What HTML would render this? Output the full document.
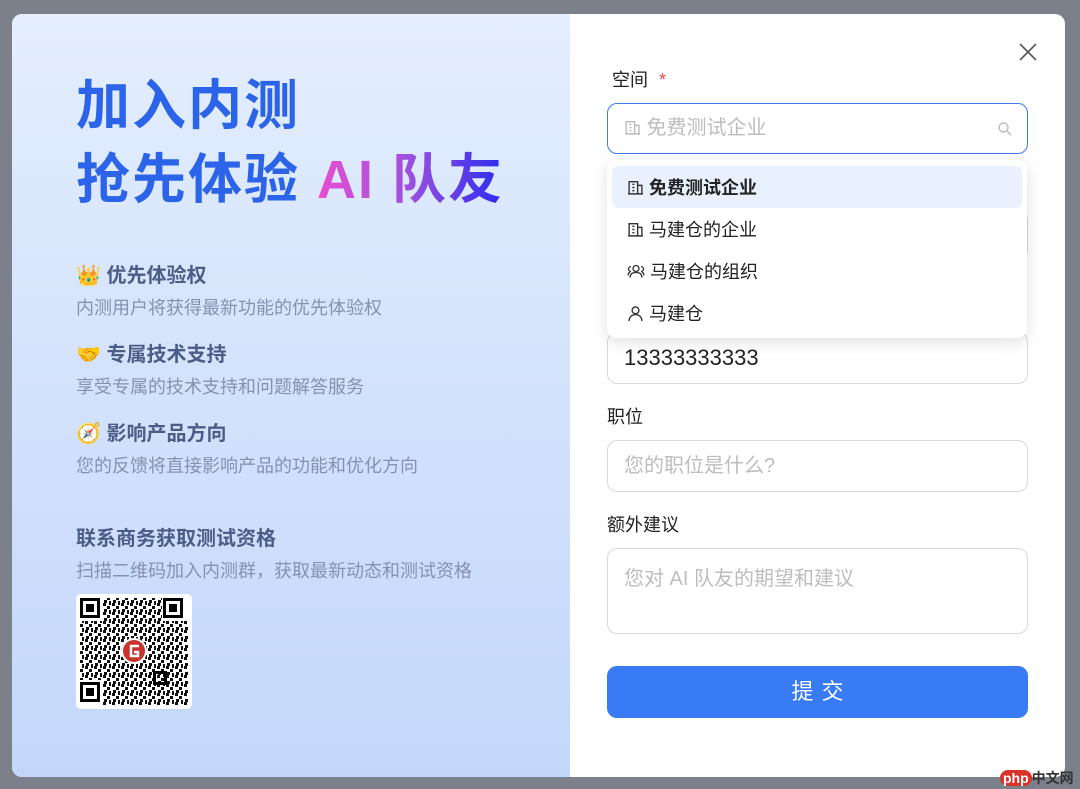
<!DOCTYPE html>
<html><head><meta charset="utf-8"><style>
*{box-sizing:border-box;margin:0;padding:0}
body{width:1080px;height:789px;background:#7b808b;font-family:"Liberation Sans","Noto Sans CJK SC",sans-serif;position:relative;overflow:hidden}
.modal{position:absolute;left:12px;top:14px;width:1053px;height:763px;border-radius:10px;overflow:hidden;background:#fff}
.left{position:absolute;left:0;top:0;width:558px;height:763px;background:linear-gradient(180deg,#e4eefe 0%,#d3e2fc 50%,#c4d7fb 100%)}
.t{position:absolute;left:64px;font-size:54px;font-weight:bold;color:#2b64e8;letter-spacing:2px;line-height:64px}
.ai{background:linear-gradient(90deg,#e84fd2,#9b4fe0 50%,#2a2cf0);-webkit-background-clip:text;background-clip:text;color:transparent}
.h{position:absolute;left:64px;font-size:20px;font-weight:bold;color:#4b5d86}
.d{position:absolute;left:64px;font-size:18px;color:#8591af}
.lab{position:absolute;left:600px;font-size:18px;color:#222}
.box{position:absolute;left:595px;width:421px;border:1px solid #d9d9d9;border-radius:10px;background:#fff;font-size:20px;padding-left:16px}
.ph{color:#bdbdbd}
</style></head><body>
<div class="modal">
<div class="left">
<div class="t" style="top:60px">加入内测</div>
<div class="t" style="top:134px">抢先体验 <span class="ai">AI 队友</span></div>
<div class="h" style="top:245px">👑 优先体验权</div>
<div class="d" style="top:280px">内测用户将获得最新功能的优先体验权</div>
<div class="h" style="top:324px">🤝 专属技术支持</div>
<div class="d" style="top:359px">享受专属的技术支持和问题解答服务</div>
<div class="h" style="top:403px">🧭 影响产品方向</div>
<div class="d" style="top:438px">您的反馈将直接影响产品的功能和优化方向</div>
<div class="h" style="top:508px">联系商务获取测试资格</div>
<div class="d" style="top:543px">扫描二维码加入内测群，获取最新动态和测试资格</div>
<svg style="position:absolute;left:64px;top:580px" width="116" height="115" viewBox="0 0 116 115">
<defs><pattern id="p" width="9" height="9" patternUnits="userSpaceOnUse">
<rect x="0" y="0" width="3" height="3" fill="#111"/><rect x="4" y="3" width="3" height="3" fill="#111"/><rect x="1" y="6" width="3" height="3" fill="#111"/><rect x="6" y="7" width="2" height="2" fill="#111"/><rect x="6" y="0" width="2" height="2" fill="#111"/></pattern></defs>
<rect width="116" height="115" rx="5" fill="#fff"/>
<rect x="4" y="4" width="108" height="107" fill="url(#p)"/>
<g fill="#fff"><rect x="3" y="3" width="24" height="24"/><rect x="86" y="3" width="27" height="24"/><rect x="3" y="86" width="24" height="26"/></g>
<g fill="none" stroke="#000" stroke-width="3"><rect x="5.5" y="5.5" width="17" height="17"/><rect x="88.5" y="5.5" width="17" height="17"/><rect x="5.5" y="89.5" width="17" height="17"/><rect x="78.5" y="78.5" width="11" height="11"/></g>
<g fill="#000"><rect x="10" y="10" width="8" height="8"/><rect x="93" y="10" width="8" height="8"/><rect x="10" y="94" width="8" height="8"/></g>
<circle cx="58" cy="57" r="13" fill="#fff"/><circle cx="58" cy="57" r="11" fill="#c8322c"/>
<path d="M63 52h-8v10h7v-4h-4" fill="none" stroke="#fff" stroke-width="2.5"/>
</svg>
</div>
<svg style="position:absolute;left:1007px;top:29px" width="18" height="18"><path d="M1 1L17 17M17 1L1 17" stroke="#555" stroke-width="1.6"/></svg>
<div class="lab" style="top:52px">空间 <span style="color:#f5474a;margin-left:6px">*</span></div>
<div class="box" style="top:89px;height:51px;border:1.5px solid #3b7cf2;line-height:48px;padding-left:16px"><span class="ph">
<svg width="17" height="17" viewBox="0 0 16 16" style="vertical-align:-2px"><path d="M2 14V2.5h8V14M10 6h4v8M1 14h14M5 5h2M5 8h2M5 11h2" fill="none" stroke="#bbb" stroke-width="1.3"/></svg> 免费测试企业</span>
<svg style="position:absolute;right:14px;top:17px" width="16" height="16"><circle cx="6.5" cy="6.5" r="4.5" fill="none" stroke="#bbb" stroke-width="1.4"/><path d="M10 10l4 4" stroke="#bbb" stroke-width="1.4"/></svg></div>
<div class="box" style="top:195px;height:52px"></div>
<div class="box" style="top:318px;height:52px;line-height:50px;color:#222;font-size:22px">13333333333</div>
<div style="position:absolute;left:595px;top:146px;width:420px;height:178px;background:#fff;border-radius:10px;box-shadow:0 4px 16px rgba(0,0,0,.12);font-size:18px;color:#222">
<div style="position:absolute;left:5px;top:6px;width:410px;height:42px;background:#e8f1fd;border-radius:6px"></div>
<div style="position:absolute;left:20px;top:14px;font-weight:bold"><svg width="17" height="17" viewBox="0 0 16 16" style="vertical-align:-2px"><path d="M2 14V2.5h8V14M10 6h4v8M1 14h14M5 5h2M5 8h2M5 11h2" fill="none" stroke="#333" stroke-width="1.3"/></svg> 免费测试企业</div>
<div style="position:absolute;left:20px;top:56px"><svg width="17" height="17" viewBox="0 0 16 16" style="vertical-align:-2px"><path d="M2 14V2.5h8V14M10 6h4v8M1 14h14M5 5h2M5 8h2M5 11h2" fill="none" stroke="#333" stroke-width="1.3"/></svg> 马建仓的企业</div>
<div style="position:absolute;left:20px;top:98px"><svg width="18" height="17" viewBox="0 0 18 16" style="vertical-align:-2px"><circle cx="9" cy="5" r="3" fill="none" stroke="#333" stroke-width="1.3"/><path d="M3 14c0-4 3-5 6-5s6 1 6 5M4 3a2.5 2.5 0 0 0 0 5M14 3a2.5 2.5 0 0 1 0 5M1 12c0-2 1-3 2-3.5M17 12c0-2-1-3-2-3.5" fill="none" stroke="#333" stroke-width="1.3"/></svg> 马建仓的组织</div>
<div style="position:absolute;left:20px;top:140px"><svg width="17" height="17" viewBox="0 0 16 16" style="vertical-align:-2px"><circle cx="8" cy="5" r="3.2" fill="none" stroke="#333" stroke-width="1.3"/><path d="M2 15c0-4 3-6 6-6s6 2 6 6" fill="none" stroke="#333" stroke-width="1.3"/></svg> 马建仓</div>
</div>
<div class="lab" style="top:389px;left:595px">职位</div>
<div class="box" style="top:426px;height:52px;line-height:50px"><span class="ph">您的职位是什么?</span></div>
<div class="lab" style="top:497px;left:595px">额外建议</div>
<div class="box" style="top:534px;height:86px;padding-top:13px"><span class="ph">您对 AI 队友的期望和建议</span></div>
<div style="position:absolute;left:595px;top:652px;width:421px;height:52px;background:#387bf5;border-radius:10px;color:#fff;font-size:22px;text-align:center;line-height:52px;letter-spacing:8px;text-indent:8px">提交</div>
</div>
<div style="position:absolute;left:1000px;top:768px;font-size:14px;color:#fff;font-weight:bold"><span style="background:#d9322b;border-radius:10px;padding:0 3px">php</span><span style="color:#333">中文网</span></div>
</body></html>
